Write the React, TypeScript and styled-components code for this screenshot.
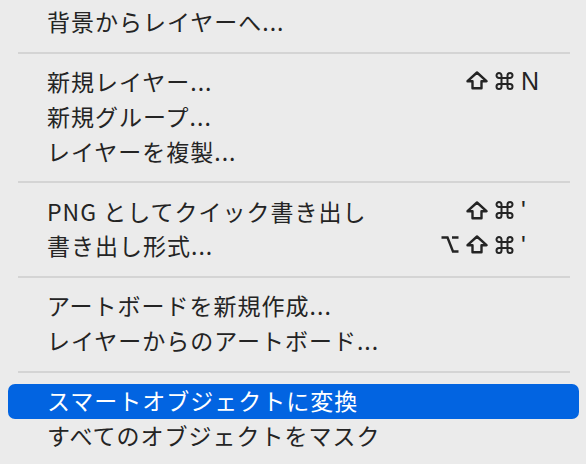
import React from "react";
import styled, { createGlobalStyle } from "styled-components";

const Global = createGlobalStyle`
  html, body { margin: 0; padding: 0; background: #ebebeb; }
  body { width: 586px; height: 464px; overflow: hidden; }
`;

const Menu = styled.div`
  display: flex;
  flex-direction: column;
  padding-top: 5.5px;
  width: 586px;
  background: #ebebeb;
  font-family: "Noto Sans CJK JP", "Noto Sans", sans-serif;
`;

const Item = styled.div<{ $active?: boolean }>`
  display: flex;
  align-items: center;
  height: 34.7px;
  margin: 0 7px 0 8px;
  padding-left: 39px;
  border-radius: 7px;
  background: ${(p) => (p.$active ? "#0264e1" : "transparent")};
  color: ${(p) => (p.$active ? "#ffffff" : "#242424")};
  font-size: 23px;
  letter-spacing: 1px;
  white-space: nowrap;
`;

const Label = styled.span`
  flex: 1;
  padding-bottom: 3px;
`;

const Mods = styled.span`
  display: flex;
  align-items: center;
  justify-content: flex-end;
  gap: 6px;
  margin-bottom: 4px;
`;

const Key = styled.span`
  width: 58px;
  margin-left: 6px;
  padding-bottom: 3px;
  font-family: "Liberation Sans", "DejaVu Sans", sans-serif;
  font-size: 25px;
  letter-spacing: 0;
`;

const Glyph = styled.svg`
  display: block;
  fill: none;
  stroke: currentColor;
  stroke-width: 2.4;
  stroke-linejoin: round;
  stroke-linecap: round;
`;

const SepBox = styled.div`
  height: 25.3px;
  display: flex;
  align-items: center;
  padding: 0 16px 0 18px;
`;

const Line = styled.div`
  flex: 1;
  height: 2px;
  background: #d4d4d4;
`;

const Shift = () => (
  <Glyph width="22" height="19" viewBox="0 0 22 19">
    <path d="M11 1.5L20.5 10.2H15.5V17.2H6.5V10.2H1.5Z" />
  </Glyph>
);

const Cmd = () => (
  <Glyph width="21" height="20" viewBox="0 0 20 20" style={{ strokeWidth: 2 }}>
    <path d="M7 7V4.5A2.5 2.5 0 1 0 4.5 7H15.5A2.5 2.5 0 1 0 13 4.5V15.5A2.5 2.5 0 1 0 15.5 13H4.5A2.5 2.5 0 1 0 7 15.5Z" />
  </Glyph>
);

const Opt = () => (
  <Glyph width="20" height="19" viewBox="0 0 20 19">
    <path d="M1.5 2.5H7.5L13 16.5H18.5M12 2.5H18.5" strokeLinecap="butt" strokeLinejoin="miter" />
  </Glyph>
);

type Mod = "shift" | "cmd" | "opt";

type Entry =
  | { sep: true }
  | { label: string; mods?: Mod[]; key?: string; active?: boolean };

const entries: Entry[] = [
  { label: "背景からレイヤーへ..." },
  { sep: true },
  { label: "新規レイヤー...", mods: ["shift", "cmd"], key: "N" },
  { label: "新規グループ..." },
  { label: "レイヤーを複製..." },
  { sep: true },
  { label: "PNG としてクイック書き出し", mods: ["shift", "cmd"], key: "'" },
  { label: "書き出し形式...", mods: ["opt", "shift", "cmd"], key: "'" },
  { sep: true },
  { label: "アートボードを新規作成..." },
  { label: "レイヤーからのアートボード..." },
  { sep: true },
  { label: "スマートオブジェクトに変換", active: true },
  { label: "すべてのオブジェクトをマスク" },
];

const renderMod = (m: Mod, j: number) =>
  m === "shift" ? <Shift key={j} /> : m === "cmd" ? <Cmd key={j} /> : <Opt key={j} />;

export default function App() {
  return (
    <>
      <Global />
      <Menu>
        {entries.map((e, i) =>
          "sep" in e ? (
            <SepBox key={i}>
              <Line />
            </SepBox>
          ) : (
            <Item key={i} $active={e.active}>
              <Label>{e.label}</Label>
              {e.mods && (
                <>
                  <Mods>{e.mods.map(renderMod)}</Mods>
                  <Key>{e.key}</Key>
                </>
              )}
            </Item>
          )
        )}
      </Menu>
    </>
  );
}
